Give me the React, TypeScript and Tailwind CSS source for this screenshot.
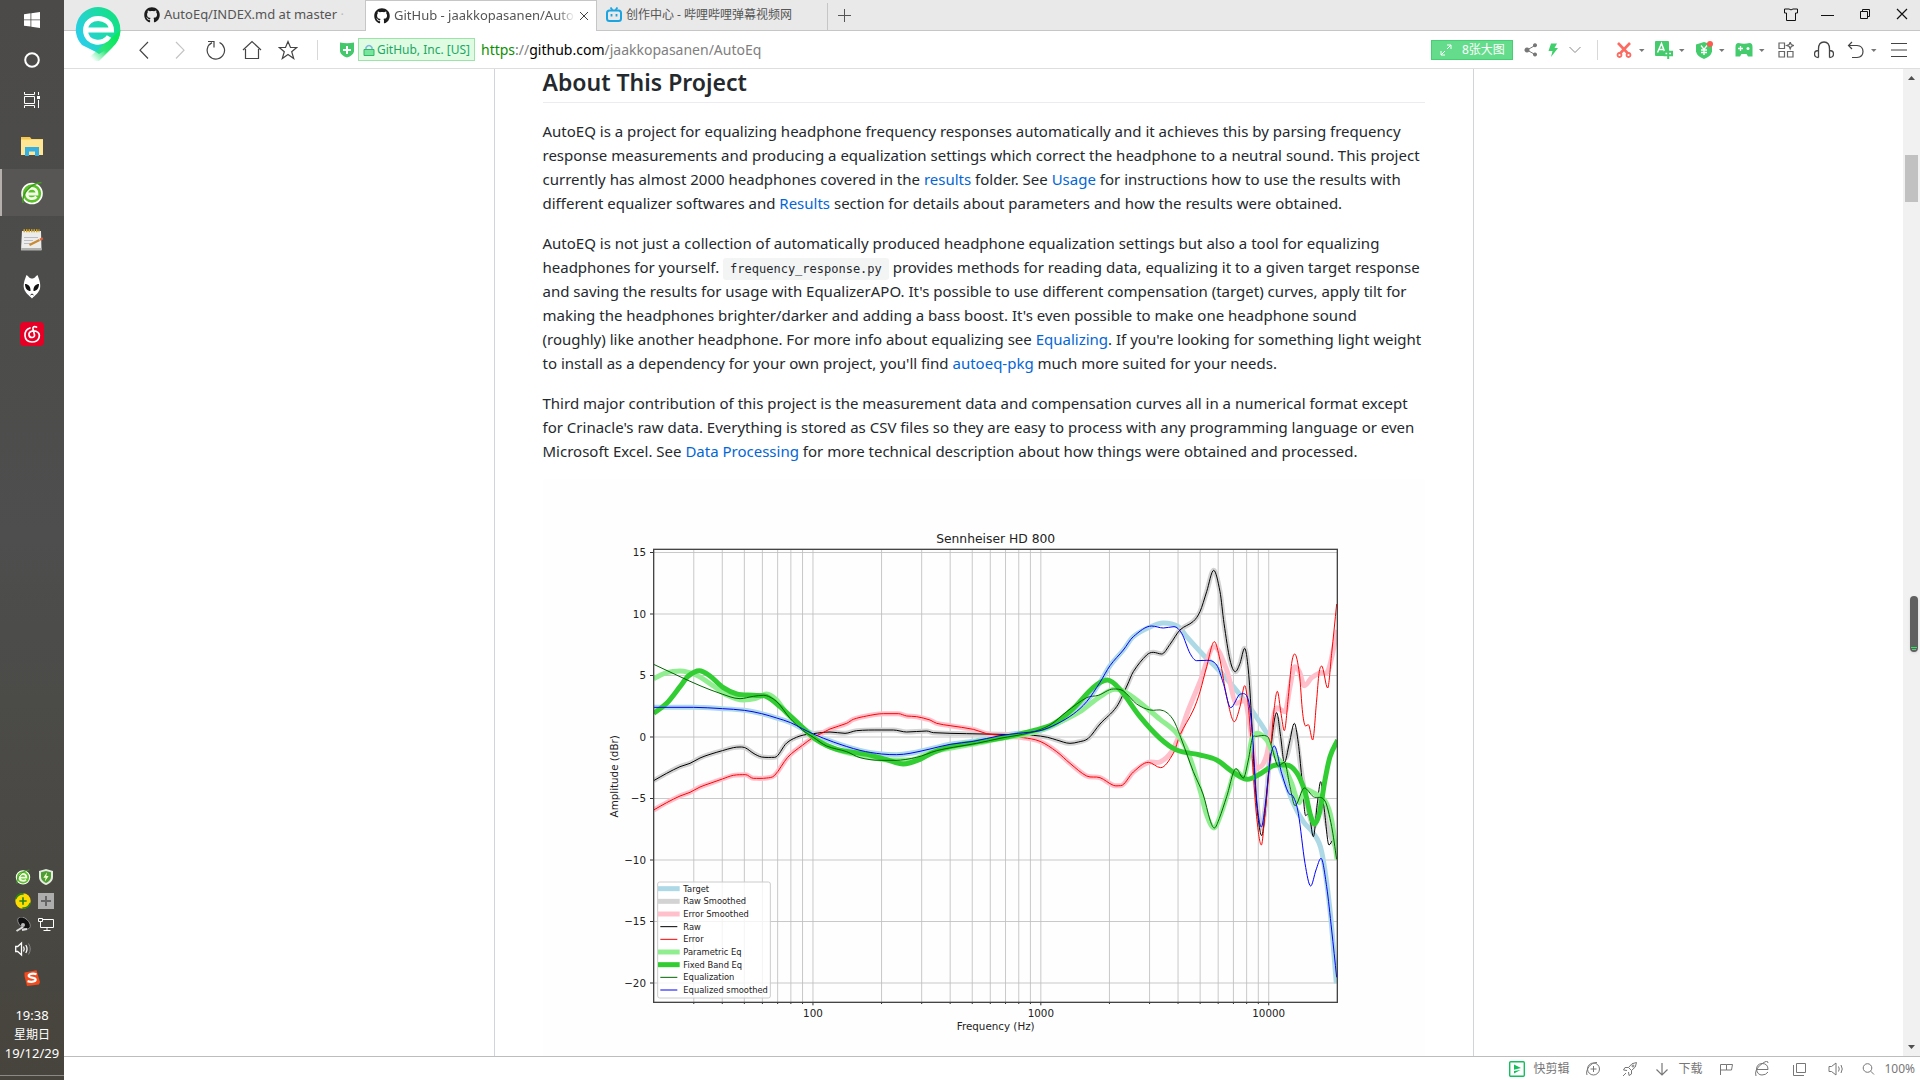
import type { ReactNode } from "react";
import { FaGithub } from "react-icons/fa";

type Point = [number, number];

/* Chart geometry: three drawing units per pixel, frequency on a log axis. */
const LEFT = 161;
const RIGHT = 2212;
const TOP = 88;
const BOTTOM = 1447;
const xOf = (hz: number) => LEFT + (Math.log10(hz / 20) * (RIGHT - LEFT)) / 3;
const yOf = (db: number) => 651 - 36.9 * db;

const shared = {
  raw: [
    [161, 782], [200, 760], [240, 740], [270, 730], [300, 714], [330, 703], [367, 692], [400, 683], [420, 681], [437, 684],
    [462, 701], [485, 711], [524, 712], [560, 669], [600, 648], [640, 641], [690, 636], [735, 640], [770, 632], [840, 630],
    [880, 630], [920, 636], [980, 633], [1000, 638], [1100, 641], [1200, 643], [1300, 646], [1343, 652], [1370, 660],
    [1410, 670], [1435, 666], [1465, 655], [1500, 612], [1550, 560], [1582, 495], [1600, 455], [1640, 405], [1660, 397],
    [1685, 402], [1710, 373], [1740, 330], [1780, 304], [1800, 275], [1820, 215], [1841, 151], [1860, 215], [1872, 310],
    [1890, 420], [1906, 455], [1920, 430], [1934, 385], [1945, 450],
  ] as Point[],
  error: [
    [161, 870], [200, 848], [240, 828], [270, 817], [300, 801], [330, 790], [367, 777], [400, 766], [437, 764], [460, 775],
    [500, 774], [524, 766], [563, 712], [607, 676], [640, 652], [665, 640], [690, 627], [740, 610], [760, 598], [800, 588],
    [850, 581], [895, 581], [920, 588], [950, 590], [990, 600], [1010, 610], [1050, 617], [1120, 628], [1160, 641],
    [1200, 646], [1270, 653], [1320, 664], [1370, 695], [1410, 730], [1460, 768], [1500, 773], [1540, 796], [1562, 797],
    [1600, 756], [1645, 727],
  ] as Point[],
  target: [
    [161, 562], [280, 562], [367, 566], [433, 571], [485, 581], [530, 594], [572, 608], [607, 626], [640, 642], [700, 666],
    [780, 691], [845, 702], [890, 704], [930, 700], [990, 687], [1050, 673], [1120, 664], [1200, 647], [1255, 640],
    [1320, 632], [1370, 612], [1420, 582], [1460, 545], [1500, 487], [1530, 437], [1570, 390], [1600, 350],
  ] as Point[],
};

const series: { name: string; color: string; thick: boolean; points: Point[] }[] = [
  {
    name: "Target", color: "#add8e6", thick: true,
    points: [...shared.target, [1650, 321], [1690, 309], [1735, 320], [1760, 350], [1810, 405], [1853, 447], [1900, 500],
      [1940, 550], [1975, 600], [2005, 650], [2050, 770], [2080, 850], [2110, 905], [2140, 940], [2165, 995], [2190, 1170], [2209, 1390]],
  },
  {
    name: "Raw Smoothed", color: "#d3d3d3", thick: true,
    points: [...shared.raw, [1955, 600], [1967, 800], [1983, 925], [1997, 850], [2012, 680], [2030, 595], [2056, 715], [2083, 630],
      [2105, 760], [2120, 850], [2142, 920], [2162, 840], [2185, 930], [2210, 990]],
  },
  {
    name: "Error Smoothed", color: "#ffc0cb", thick: true,
    points: [...shared.error, [1680, 726], [1715, 695], [1740, 640], [1765, 570], [1800, 485], [1843, 380], [1880, 450], [1910, 550],
      [1934, 540], [1950, 620], [1965, 735], [1980, 740], [2000, 705], [2015, 620], [2030, 563], [2055, 575], [2070, 500],
      [2084, 440], [2098, 455], [2113, 497], [2135, 473], [2160, 458], [2185, 450], [2212, 330]],
  },
  {
    name: "Raw", color: "#000000", thick: false,
    points: [...shared.raw, [1955, 600], [1963, 760], [1974, 890], [1985, 947], [1995, 880], [2012, 690], [2030, 578], [2042, 650],
      [2053, 728], [2068, 670], [2083, 610], [2095, 670], [2105, 770], [2117, 887], [2126, 880], [2140, 950], [2152, 850],
      [2162, 785], [2173, 870], [2187, 975], [2200, 960], [2210, 985]],
  },
  {
    name: "Error", color: "#ff0000", thick: false,
    points: [...shared.error, [1682, 743], [1720, 700], [1740, 645], [1780, 570], [1800, 515], [1820, 440], [1843, 365], [1860, 420],
      [1880, 530], [1903, 605], [1920, 560], [1934, 497], [1945, 560], [1955, 690], [1970, 890], [1984, 975], [1995, 880],
      [2010, 720], [2020, 590], [2032, 514], [2043, 580], [2053, 632], [2065, 530], [2075, 430], [2084, 402], [2098, 460],
      [2108, 580], [2117, 618], [2125, 614], [2138, 660], [2150, 540], [2157, 460], [2165, 438], [2183, 504], [2195, 400], [2210, 252]],
  },
  {
    name: "Parametric Eq", color: "#90ee90", thick: true,
    points: [[161, 476], [200, 458], [240, 453], [290, 466], [340, 498], [380, 525], [430, 540], [465, 536], [500, 522], [530, 540],
      [560, 580], [607, 622], [660, 665], [720, 692], [800, 710], [870, 720], [930, 720], [1000, 695], [1120, 672], [1200, 656],
      [1290, 640], [1360, 615], [1440, 575], [1500, 530], [1545, 508], [1590, 525], [1680, 598], [1730, 640], [1765, 700],
      [1800, 810], [1820, 885], [1842, 924], [1860, 890], [1885, 815], [1908, 752], [1930, 772], [1945, 715], [1955, 660],
      [1972, 640], [2000, 660], [2020, 700], [2050, 735], [2075, 790], [2097, 848], [2115, 808], [2140, 818], [2175, 843],
      [2195, 900], [2211, 1018]],
  },
  {
    name: "Fixed Band Eq", color: "#32cd32", thick: true,
    points: [[161, 580], [200, 550], [240, 500], [265, 468], [298, 452], [330, 468], [370, 503], [410, 522], [460, 526], [500, 530],
      [540, 560], [600, 615], [650, 660], [710, 688], [800, 703], [860, 719], [910, 732], [960, 718], [1000, 697], [1050, 680],
      [1120, 668], [1200, 655], [1300, 632], [1360, 612], [1420, 565], [1480, 502], [1522, 480], [1560, 508], [1620, 590],
      [1680, 655], [1730, 690], [1800, 705], [1850, 720], [1900, 757], [1942, 778], [1980, 762], [2020, 737], [2060, 735],
      [2090, 758], [2115, 815], [2130, 880], [2143, 912], [2158, 880], [2175, 780], [2190, 710], [2213, 660]],
  },
  {
    name: "Equalization", color: "#006400", thick: false,
    points: [[161, 433], [240, 470], [300, 497], [360, 520], [420, 536], [460, 529], [490, 526], [530, 545], [570, 595], [607, 630],
      [640, 652], [680, 678], [740, 695], [780, 713], [840, 721], [885, 721], [950, 712], [1010, 692], [1060, 682], [1130, 670],
      [1200, 655], [1290, 638], [1350, 615], [1400, 575], [1460, 533], [1495, 526], [1540, 507], [1570, 513], [1610, 552],
      [1650, 570], [1690, 572], [1720, 600], [1745, 660], [1780, 755], [1810, 825], [1830, 900], [1843, 924], [1858, 895],
      [1880, 830], [1908, 746], [1930, 774], [1945, 720], [1957, 655], [1967, 649], [2003, 650], [2015, 680], [2035, 738],
      [2053, 727], [2070, 800], [2085, 857], [2113, 804], [2140, 830], [2175, 843], [2195, 920], [2210, 1018]],
  },
  {
    name: "Equalized smoothed", color: "#0000ff", thick: false,
    points: [...shared.target, [1655, 318], [1690, 324], [1722, 320], [1745, 340], [1770, 400], [1790, 422], [1820, 421], [1850, 435],
      [1870, 490], [1892, 563], [1922, 522], [1945, 540], [1957, 640], [1970, 840], [1984, 921], [1995, 860], [2012, 710],
      [2023, 678], [2045, 760], [2065, 818], [2080, 830], [2095, 880], [2115, 1030], [2132, 1098], [2148, 1050], [2163, 1015],
      [2180, 1100], [2195, 1230], [2210, 1372]],
  },
];

/* Cubic through every point, flat at local peaks and dips. */
function smoothPath(points: Point[]) {
  let d = `M${points[0][0]} ${points[0][1]}`;
  for (let i = 0; i < points.length - 1; i++) {
    const a = points[Math.max(0, i - 1)];
    const b = points[i];
    const c = points[i + 1];
    const e = points[Math.min(points.length - 1, i + 2)];
    const w = (c[0] - b[0]) / 3;
    const slope = (p: Point, m: Point, n: Point) =>
      p === m || m === n ? 0 : (m[1] - p[1]) * (n[1] - m[1]) <= 0 ? 0 : (n[1] - p[1]) / (n[0] - p[0]);
    const first = i === 0 ? (c[1] - b[1]) / (c[0] - b[0]) : slope(a, b, c);
    const last = c === e ? (c[1] - b[1]) / (c[0] - b[0]) : slope(b, c, e);
    d += `C${b[0] + w} ${b[1] + w * first} ${c[0] - w} ${c[1] - w * last} ${c[0]} ${c[1]}`;
  }
  return d;
}

const frequencies = [30, 40, 50, 60, 70, 80, 90].flatMap((f) => [f, f * 10, f * 100]).concat([100, 200, 1000, 2000, 10000]);
const levels = [15, 10, 5, 0, -5, -10, -15, -20];

function Chart() {
  return (
    <svg viewBox="-171 -123 2646 1764" className="block w-full" role="img" aria-label="Sennheiser HD 800 frequency response" fontFamily='"DejaVu Sans", sans-serif' fill="#222">
      <rect x="-171" y="-123" width="2646" height="1764" fill="#fefefe" />
      <defs>
        <clipPath id="plot"><rect x={LEFT} y={TOP} width={RIGHT - LEFT} height={BOTTOM - TOP} /></clipPath>
      </defs>
      <g stroke="#b0b0b0" strokeWidth="2.6" opacity="0.8">
        {frequencies.map((f) => <path key={f} d={`M${xOf(f)} ${TOP}V${BOTTOM}`} />)}
        {levels.map((v) => <path key={v} d={`M${LEFT} ${yOf(v)}H${RIGHT}`} />)}
      </g>
      <g stroke="#333" strokeWidth="3">
        {frequencies.map((f) => <path key={f} d={`M${xOf(f)} ${BOTTOM}v${[100, 1000, 10000].includes(f) ? 9 : 5}`} />)}
        {levels.map((v) => <path key={v} d={`M${LEFT} ${yOf(v)}h-11`} />)}
      </g>
      <g clipPath="url(#plot)" fill="none">
        {series.map((s) => <path key={s.name} d={smoothPath(s.points)} stroke={s.color} strokeWidth={s.thick ? 15 : 3} strokeLinejoin="round" />)}
      </g>
      <rect x={LEFT} y={TOP} width={RIGHT - LEFT} height={BOTTOM - TOP} fill="none" stroke="#444" strokeWidth="4" />
      <rect x="173" y="1086" width="338" height="348" rx="6" fill="#fff" fillOpacity="0.8" stroke="#ccc" strokeWidth="3" />
      {series.map((s, i) => (
        <g key={s.name}>
          <path d={`M${s.thick ? 174 : 181} ${1106 + i * 38}H${s.thick ? 239 : 232}`} stroke={s.color} strokeWidth={s.thick ? 15 : 3} />
          <text x="250" y={1115 + i * 38} fontSize="25">{s.name}</text>
        </g>
      ))}
      <g fontSize="31">
        <g textAnchor="end">
          {levels.map((v) => <text key={v} x="138" y={yOf(v) + 11}>{String(v).replace("-", "−")}</text>)}
        </g>
        <g textAnchor="middle">
          {[100, 1000, 10000].map((f) => <text key={f} x={xOf(f)} y="1490">{f}</text>)}
          <text x="1187" y="1530">Frequency (Hz)</text>
          <text transform="translate(53 769) rotate(-90)">Amplitude (dBr)</text>
          <text x="1187" y="69" fontSize="37">Sennheiser HD 800</text>
        </g>
      </g>
    </svg>
  );
}

function Icon({ size = 24, children, className = "", vb = 24 }: { size?: number; vb?: number; children: ReactNode; className?: string }) {
  return (
    <svg width={size} height={size} viewBox={`0 0 ${vb} ${vb}`} fill="none" stroke="currentColor" className={`shrink-0 ${className}`} aria-hidden="true">
      {children}
    </svg>
  );
}

function GreenE({ size }: { size: number }) {
  return (
    <Icon size={size}>
      <circle cx="12" cy="12.5" r="10" fill="#5cc02a" stroke="#fff" strokeWidth="1.6" />
      <path d="M6.500 13H17C17.400 5.600 7 5.600 6.700 13C7 18.700 14 18.500 16.500 15.800" stroke="#f4ffe8" strokeWidth="2.800" />
      <path d="M3 22C1.500 13 10 2.500 21.500 1.500" stroke="#3f9b1e" strokeWidth="1.500" />
    </Icon>
  );
}

function TaskButton({ label, active, children }: { label: string; active?: boolean; children: ReactNode }) {
  return (
    <button aria-label={label} className={`flex h-[47px] w-full items-center justify-center ${active ? "border-l-2 border-[#b5b0ab] bg-[#575654] pr-0.5" : ""}`}>
      {children}
    </button>
  );
}

function Taskbar() {
  return (
    <aside className="flex w-16 shrink-0 flex-col bg-linear-to-b from-[#4b4a48] via-[#4d4e4d] to-[#47443d] text-white">
      <button aria-label="Start" className="flex h-10 items-center justify-center">
        <Icon size={16} vb={16}><path fill="#fff" stroke="none" d="M0 2.200 6.500 1.300V7.500H0zM7.300 1.200 16 0V7.500H7.300zM0 8.300H6.500V14.600L0 13.700zM7.300 8.300H16V16L7.300 14.800z" /></Icon>
      </button>
      <button aria-label="Cortana" className="flex h-10 items-center justify-center">
        <Icon size={16} vb={16}><circle cx="8" cy="8" r="6.800" strokeWidth="2" /></Icon>
      </button>
      <button aria-label="Task view" className="flex h-10 items-center justify-center">
        <Icon size={16} vb={16}><path d="M.5 4.500h10v7H.5zM.5 0v2.500h10V0M.5 16v-2.500h10V16M14.500 0v3M14.500 8v8" /><path fill="#fff" stroke="none" d="M13 4h3v3h-3z" /></Icon>
      </button>
      <div className="flex flex-col pt-0.5">
        <TaskButton label="File Explorer">
          <Icon><path fill="#f8c84a" stroke="none" d="M1 3h9l1.500 2H23v5H1z" /><path fill="#ffe694" stroke="none" d="M1 5.500h22V21H1z" /><path fill="#35aee2" stroke="none" d="M5 13h14v9h-4v-4.500H9V22H5z" /></Icon>
        </TaskButton>
        <TaskButton label="360 browser" active><GreenE size={24} /></TaskButton>
        <TaskButton label="Notepad">
          <Icon><path fill="#ececea" stroke="none" d="M2 3h19l.5 19H1z" /><path fill="#b0b0ae" stroke="none" d="M1.200 20h20.200l.1 2.500H1z" /><path stroke="#d8a520" strokeWidth="3" strokeDasharray="1.500 1" d="M3.500 2.800h16" /><path stroke="#b9bcc2" d="M4 9.500h14M4 12.500h9M4 15.500h7" /><path stroke="#c98a32" strokeWidth="2.200" d="m9.500 17 10-5" /><path stroke="#e0603a" strokeWidth="2.400" d="m20 11.700 2.800-1.400" /></Icon>
        </TaskButton>
        <TaskButton label="foobar2000">
          <Icon><path fill="#fff" stroke="none" d="M6.500 0C8.500 1 9 3.500 12 3.500S15.500 1 17.500 0c1.500 4 3.500 9 2.500 13.500C19 17.500 15 20.500 12 23.500 9 20.500 5 17.500 4 13.500 3 9 5 4 6.500 0z" /><path fill="#111" stroke="none" d="M5 9c3 0 6 2.500 5.500 7C7.500 16 5 13.500 5 9zM19 9c-3 0-6 2.500-5.500 7 3 0 5.500-2.500 5.500-7z" /><path stroke="#222" d="m10.500 20 1.500-1 1.500 1" /></Icon>
        </TaskButton>
        <TaskButton label="NetEase Music">
          <Icon><rect width="24" height="24" rx="4" fill="#e60026" stroke="none" /><path stroke="#fff" strokeWidth="1.700" strokeLinecap="round" d="M10 6C3 8.500 3 19.500 12 20 20 20 21.500 11.500 16 9.300 12.500 8 8.500 9.800 9 13c.6 3.500 6 3.200 5.500-.2L13 7c-.5-2.300 1.500-3 3.500-2" /></Icon>
        </TaskButton>
      </div>
      <div className="mt-auto grid grid-cols-2 justify-items-center gap-y-2 pr-[6px] pl-[11px]">
        <GreenE size={16} />
        <Icon size={16}><path fill="#e4ebdf" stroke="none" d="M12 0l10.500 3v9c0 6-5 10-10.500 12C6.500 22 1.500 18 1.500 12V3z" /><path fill="#4f9d35" stroke="none" d="M12 3l7.500 2v7c0 4.500-3.500 7-7.500 9-4-2-7.500-4.500-7.500-9V5z" /><path fill="#f4ffd0" stroke="none" d="M13.500 5 8 13h3.500L10 19l6-8.500h-3.500z" /></Icon>
        <Icon size={16}><circle cx="12" cy="12" r="11.500" fill="#ffdc00" stroke="none" /><path stroke="#27861b" strokeWidth="2.500" d="M1 9C3 4 8 1 13 1.500M23 15c-2 5-7 8-12 7.500M12 6.500v11M6.500 12h11" /></Icon>
        <Icon size={16} vb={16}><path fill="#adadad" stroke="none" d="M0 0h16v16H0z" /><path stroke="#666" strokeWidth="2" d="M8 3v10M3 8h10" /></Icon>
        <Icon size={16} vb={16}><ellipse cx="9" cy="6" rx="7.500" ry="4.500" transform="rotate(42 9 6)" fill="#111" stroke="#999" strokeWidth=".8" /><path stroke="#ddd" strokeWidth="2" d="M1.500 14 8 10M7 13l5-1" /><circle cx="8" cy="8" r="2" fill="#bbb" stroke="none" /></Icon>
        <Icon size={16} vb={16}><path d="M5 2.500h10.500v8H2.500V6M9 10.500V13.500M5.500 13.500h7M.5 1.500h4v3h-4zM2.500 4.500V7" /></Icon>
        <Icon size={16} vb={16}><path strokeWidth="1.300" d="M.7 5.500h2L6.500 2v12L2.700 10.500h-2zM8.500 5.500q1.500 2.500 0 5M10.800 4q2.500 4 0 8" /><path stroke="#888" d="M13.500 2.500q3.500 5.500 0 11" /></Icon>
      </div>
      <div className="mt-[13px] flex justify-center">
        <Icon size={16} vb={16}><path fill="#f24a1c" stroke="none" d="m.5 2.500 12-2.300L16 12l-1 2.500L3 16 .5 6z" /><path stroke="#fff" strokeWidth="2.200" d="M12.500 4.200C9 3.200 4.500 3.800 4.700 6s6.800 1 7 3.500c0 2.500-5 2.800-8.200 1.600" /></Icon>
      </div>
      <div className="mt-5 flex flex-col items-center border-b border-[#8b8985] pb-3 text-[13px] leading-[19px]">
        <span>19:38</span>
        <span className="text-xs leading-[19px]">星期日</span>
        <span>19/12/29</span>
      </div>
      <div className="h-1" />
    </aside>
  );
}

function BrowserLogo() {
  return (
    <svg width="46" height="56" viewBox="0 0 46 56" fill="none" className="absolute top-1.5 left-[11px]" aria-hidden="true">
      <defs>
        <linearGradient id="disc" x1="0" y1="34" x2="46" y2="10" gradientUnits="userSpaceOnUse"><stop stopColor="#2bcdf2" /><stop offset=".55" stopColor="#1ed9ae" /><stop offset="1" stopColor="#0fe37a" /></linearGradient>
        <linearGradient id="tail" x1="40" y1="32" x2="18" y2="54" gradientUnits="userSpaceOnUse"><stop stopColor="#0ae85f" /><stop offset=".5" stopColor="#2de678" /><stop offset="1" stopColor="#2de678" stopOpacity="0" /></linearGradient>
      </defs>
      <path fill="url(#disc)" d="M23 1a22.500 22.500 0 0 1 17 37L24 48l-3-2L7 39A22.500 22.500 0 0 1 23 1z" />
      <path fill="url(#tail)" d="M45.500 24C45 32 42 37 37 42L24 55H10L34 34z" />
      <path d="M10 24H36.500C36 9 10.500 8 10.500 24.500 11 38 29 39.500 34 30.500" stroke="#fff" strokeWidth="5" />
    </svg>
  );
}

function BilibiliIcon() {
  return (
    <Icon size={16} vb={16} className="text-[#1ba4e0]">
      <rect x="1" y="3.500" width="14" height="10.500" rx="2.500" strokeWidth="2" />
      <path strokeWidth="1.800" d="m4.500.5 2 2.500M11.500.5l-2 2.500M5.500 7v2.500M10.500 7v2.500" />
    </Icon>
  );
}

function TitleBar() {
  return (
    <header className="flex h-[31px] bg-[#e9e9e9] text-[13px] text-[#555]">
      <div role="tablist" className="flex min-w-0">
        <button role="tab" className="flex w-[301px] items-center gap-1 border-b border-[#c6c6c6] pl-20 whitespace-nowrap">
          <FaGithub size={16} color="#1b1b1b" /><span>AutoEq/INDEX.md at master <span className="text-[#bbb]">·</span></span>
        </button>
        <button role="tab" aria-selected="true" className="flex w-[232px] items-center gap-1 border-x border-t border-[#c6c6c6] bg-white pl-2 whitespace-nowrap">
          <FaGithub size={16} color="#1b1b1b" className="shrink-0" />
          <span className="w-[181px] shrink-0 mask-r-from-90% text-left">GitHub - jaakkopasanen/Auto</span>
          <Icon size={10} vb={10} className="text-[#444]"><path d="m1 1 8 8M9 1 1 9" /></Icon>
        </button>
        <button role="tab" className="flex w-[231px] items-center gap-1 border-b border-[#c6c6c6] pl-[9px] text-xs">
          <BilibiliIcon /><span>创作中心 - 哔哩哔哩弹幕视频网</span>
          <span className="ml-auto h-[27px] w-px self-end bg-[#c6c6c6]" />
        </button>
      </div>
      <div className="flex flex-1 items-center justify-between border-b border-[#c6c6c6]">
        <button aria-label="New tab" className="flex w-8 justify-center text-[#555]"><Icon size={13} vb={13}><path d="M6.500 0v13M0 6.500h13" /></Icon></button>
        <div className="flex text-[#111]">
          <button aria-label="Skins" className="flex w-[37px] justify-center"><Icon size={14} vb={14}><path d="M4 1h1q2 1.800 4 0h1l3.500 0V5h-2v7.500h-9V5h-2V1z" /></Icon></button>
          <button aria-label="Minimize" className="flex w-[37px] justify-center"><Icon size={13} vb={13}><path d="M0 7.500h13" /></Icon></button>
          <button aria-label="Restore" className="flex w-[37px] justify-center"><Icon size={12} vb={12}><path d="M1.500 3.500h7v7h-7zM3.500 3.500v-2h7v7h-2" /></Icon></button>
          <button aria-label="Close" className="flex w-[37px] justify-center"><Icon size={12} vb={12}><path strokeWidth="1.200" d="m1 1 10 10M11 1 1 11" /></Icon></button>
        </div>
      </div>
    </header>
  );
}

function Tool({ label, children }: { label: string; children: ReactNode }) {
  return <button aria-label={label} className="flex w-6 shrink-0 justify-center">{children}</button>;
}

function Caret() {
  return <Icon size={11} vb={11} className="text-[#777]"><path fill="currentColor" stroke="none" d="M3 5h5.500L5.800 8z" /></Icon>;
}

function ToolWithMenu({ label, children }: { label: string; children: ReactNode }) {
  return <button aria-label={label} className="flex w-10 shrink-0 items-center"><span className="flex w-6 justify-center">{children}</span><Caret /></button>;
}

function Toolbar() {
  return (
    <div className="flex h-[38px] items-center justify-between border-b border-[#dedede] bg-white pl-[68px] text-[#444]">
      <div className="flex items-center">
        <div className="flex items-center gap-3">
          <Tool label="Back"><Icon size={20} vb={20}><path strokeWidth="1.200" d="M14 2 6 10.200 14 18.500" /></Icon></Tool>
          <Tool label="Forward"><Icon size={20} vb={20} className="text-[#c4c4c4]"><path strokeWidth="1.200" d="m6 2 8 8.200L6 18.500" /></Icon></Tool>
          <Tool label="Reload"><Icon size={20} vb={20}><path strokeWidth="1.200" d="M13.500 2.500A8.700 8.700 0 1 1 6 2.600M2 1.500h6v6" /></Icon></Tool>
          <Tool label="Home"><Icon size={20} vb={20}><path strokeWidth="1.200" d="M1 10 10 1.500 19 10M3.500 9v9.500h13V9" /></Icon></Tool>
          <Tool label="Favourite"><Icon size={20} vb={20}><path strokeWidth="1.200" d="m10 1.500 2.500 6h6.200l-5 4.200 2 6.800-5.700-4-5.700 4 2-6.800-5-4.200h6.200z" /></Icon></Tool>
        </div>
        <div className="ml-[17px] h-5 w-px bg-[#d8d8d8]" />
        <Icon size={16} vb={16} className="ml-[21px]"><path fill="#43c96b" stroke="none" d="M1 .5q7 1.500 14 0v9q-1 4-7 6-6-2-7-6z" /><path stroke="#fff" strokeWidth="2" d="M8 4v8M4 8h8" /></Icon>
        <div className="ml-[3px] flex h-[23px] w-[117px] items-center border border-[#9be3a8] bg-[#dffbe2] pl-1 text-xs whitespace-nowrap text-[#20a765]">
          <Icon size={12} vb={12}><path stroke="#7fb8dc" strokeWidth="1.500" d="M3 6V3.500q3-4 6 0V6" /><path fill="#79e49b" stroke="#2fb865" d="M1 5.500h10v6H1z" /></Icon>
          <span className="pl-0.5">GitHub, Inc. [US]</span>
        </div>
        <a href="https://github.com/jaakkopasanen/AutoEq" className="ml-1.5 text-sm text-[#808080]"><span className="text-[#0b8f00]">https</span>://<span className="text-black">github.com</span>/jaakkopasanen/AutoEq</a>
      </div>
      <div className="flex items-center pr-[9px]">
        <button className="flex h-5 w-[82px] items-center gap-2.5 border border-[#45cf73] bg-[#64dc8c] pl-2 text-xs text-white">
          <Icon size={12} vb={12}><path d="M7 1h4v4M11 1 7 5M5 11H1V7M1 11l4-4" /></Icon>8张大图
        </button>
        <div className="ml-1.5 flex items-center">
          <Tool label="Share"><Icon size={14} vb={14} className="text-[#777]"><path d="M11 2.500 3 7l8 4.500" /><path fill="currentColor" stroke="none" d="M3 4.500a2.500 2.500 0 1 0 .01 0zM11 .3a2 2 0 1 0 .01 0zM11 9.500a2 2 0 1 0 .01 0z" /></Icon></Tool>
          <button aria-label="Turbo" className="flex w-5 justify-center"><Icon size={14} vb={14}><path fill="#3fcf6b" stroke="none" d="M5 .5h6L8.500 5h3.500L5 14l1.500-6H2.500z" /></Icon></button>
          <Tool label="More"><Icon size={12} vb={12} className="text-[#888]"><path d="m.5 3 5.500 5.500L11.500 3" /></Icon></Tool>
        </div>
        <div className="mr-3.5 ml-2.5 h-5 w-px bg-[#d8d8d8]" />
        <ToolWithMenu label="Screenshot"><Icon size={16} vb={16}><path stroke="#fb6b62" strokeWidth="2.600" d="M2 1 12 11.500M14 1 4 11.500" /><path stroke="#fb6b62" strokeWidth="1.800" d="M3.500 11a2 2 0 1 0 .01 0zM12.500 11a2 2 0 1 0 .01 0z" /></Icon></ToolWithMenu>
        <ToolWithMenu label="Translate"><Icon size={18} vb={18}><rect width="14" height="15" rx="1" fill="#43cb6c" stroke="none" /><path stroke="#fff" strokeWidth="1.500" d="m2.500 11.500 4-9 3 8M4 8.500h4.500" /><path stroke="#fff" strokeWidth="4" d="M9 12.500h8M13 10v8" /><path stroke="#43cb6c" strokeWidth="2" d="M9.500 10.800h7.500v3.400H9.500zM13.200 9v9" /></Icon></ToolWithMenu>
        <ToolWithMenu label="Shopping"><Icon size={18} vb={18}><path fill="#43cb6c" stroke="none" d="M1 3.500 9 1l8 2.500v7q-1 5-8 7.500-7-2.500-8-7.500z" /><path stroke="#fff" strokeWidth="1.300" d="m6 4.500 3 4 3-4M9 8.500V14M6 9h6M6 11.500h6" /><circle cx="15" cy="3" r="3" fill="#ff5a52" stroke="none" /></Icon></ToolWithMenu>
        <ToolWithMenu label="Games"><Icon size={18} vb={18}><path fill="#43cb6c" stroke="none" d="M3.500 2q5.500 1.500 11 0Q17.500 2 17.500 6v9.500H13L11.500 13h-5L5 15.500H.5V6q0-4 3-4z" /><path stroke="#fff" strokeWidth="1.300" d="M5.500 5v5M3 7.500h5" /><circle cx="13" cy="7.500" r="1.500" fill="#fff" stroke="none" /></Icon></ToolWithMenu>
        <button aria-label="Extensions" className="flex w-7 justify-center"><Icon size={16} vb={16} className="text-[#666]"><path strokeWidth="1.200" d="M1 1h5.500v5.500H1zM1 9.500h5.500V15H1zM9.500 9.500H15V15H9.500zM12.200 0l1 2.500 2.500 1-2.500 1-1 2.500-1-2.500-2.500-1 2.500-1z" /></Icon></button>
        <div className="ml-3 flex items-center">
          <Tool label="Music"><Icon size={20} vb={20}><path strokeWidth="1.300" d="M4.500 17.500V9q0-7 5.500-7t5.500 7v8.500M4.500 17.500Q.5 17.500.5 14t4-3.500M15.500 17.500q4 0 4-3.500t-4-3.500" /></Icon></Tool>
        </div>
        <div className="ml-2 flex items-center">
          <Tool label="Undo"><Icon size={18} vb={18}><path strokeWidth="1.200" d="M5 1 1.500 4.500 5 8M1.500 4.500H10Q16 5 16 10.500T10 16.500H5" /></Icon></Tool>
          <Caret />
        </div>
        <div className="ml-2 flex"><Tool label="Menu"><Icon size={16} vb={16}><path d="M0 1.500h16M0 8h16M0 14.500h16" /></Icon></Tool></div>
      </div>
    </div>
  );
}

function Link({ children }: { children: ReactNode }) {
  return <a href="#" className="text-[#0366d6]">{children}</a>;
}

function Article() {
  return (
    <article className="mx-auto w-[980px] border-x border-[#d1d5da] px-12 text-[15px] leading-6 whitespace-nowrap text-[#24292e]">
      <h2 className="border-b border-[#eaecef] pb-[7px] text-[23px] leading-[26px] font-semibold">About This Project</h2>
      <p className="mt-4">
        AutoEQ is a project for equalizing headphone frequency responses automatically and it achieves this by parsing frequency<br />
        response measurements and producing a equalization settings which correct the headphone to a neutral sound. This project<br />
        currently has almost 2000 headphones covered in the <Link>results</Link> folder. See <Link>Usage</Link> for instructions how to use the results with<br />
        different equalizer softwares and <Link>Results</Link> section for details about parameters and how the results were obtained.
      </p>
      <p className="mt-4">
        AutoEQ is not just a collection of automatically produced headphone equalization settings but also a tool for equalizing<br />
        headphones for yourself. <code className="rounded-[3px] bg-[#f3f4f4] px-[7px] py-1 font-['DejaVu_Sans_Mono',monospace] text-xs">frequency_response.py</code> provides methods for reading data, equalizing it to a given target response<br />
        and saving the results for usage with EqualizerAPO. It's possible to use different compensation (target) curves, apply tilt for<br />
        making the headphones brighter/darker and adding a bass boost. It's even possible to make one headphone sound<br />
        (roughly) like another headphone. For more info about equalizing see <Link>Equalizing</Link>. If you're looking for something light weight<br />
        to install as a dependency for your own project, you'll find <Link>autoeq-pkg</Link> much more suited for your needs.
      </p>
      <p className="mt-4">
        Third major contribution of this project is the measurement data and compensation curves all in a numerical format except<br />
        for Crinacle's raw data. Everything is stored as CSV files so they are easy to process with any programming language or even<br />
        Microsoft Excel. See <Link>Data Processing</Link> for more technical description about how things were obtained and processed.
      </p>
      <div className="mt-4"><Chart /></div>
    </article>
  );
}

function StatusBar() {
  return (
    <footer className="flex h-6 items-center justify-end border-t border-[#bdbdbd] bg-white pr-[5px] text-xs text-[#777]">
      <button className="flex items-center gap-2"><Icon size={16} vb={16} className="text-[#12bf5c]"><rect x=".7" y=".7" width="14.600" height="14.600" rx="1" strokeWidth="1.400" /><path fill="currentColor" stroke="none" d="m5 3.500 7 3.500-7 1.800zM5 10l6.500-1L5 12.500z" /></Icon>快剪辑</button>
      <button aria-label="Speed up" className="ml-4"><Icon size={16} vb={16}><circle cx="8.500" cy="8" r="6" /><path d="M2 14C0 9 6 1 12 1.500M8.500 5v6M5.500 8h6" /></Icon></button>
      <button aria-label="Boost" className="ml-[21px]"><Icon size={16} vb={16}><path d="M14.500 1.500q-5 0-8 5L9.500 9.500q5-3 5-8zM6.500 6.500H3L1.500 9 5 9.500M9.500 9.500V13L7 14.500 6.500 11M4 12l-3 3" /><circle cx="11" cy="5" r="1" /></Icon></button>
      <button className="ml-4 flex items-center gap-2"><Icon size={16} vb={16}><path strokeWidth="1.200" d="M8 2v12M2.500 8.500 8 14l5.500-5.500" /></Icon>下载</button>
      <button aria-label="Flag" className="ml-4"><Icon size={16} vb={16}><path d="M2.500 14V3.500h6v5.500h-6M8.500 3.500h6l-1 5.500h-5" /></Icon></button>
      <button aria-label="Engine" className="ml-5"><Icon size={16} vb={16}><path d="M2.500 8.500h11.500q0-6-6-6-5.500.5-5.500 6 1 5.500 5.500 5.500 4 0 6-3M2 15Q0 9 7 3.500T14 2" /></Icon></button>
      <button aria-label="Windows" className="ml-[21px]"><Icon size={16} vb={16}><path d="M5.500 2.500h9v9h-9zM2.500 4v10.500H13" /></Icon></button>
      <button aria-label="Sound" className="ml-[21px]"><Icon size={16} vb={16}><path d="M1 5.500h2.500L8 2v12L3.500 10.500H1zM10.500 5.500q1.500 2.500 0 5M13 4q2.500 4 0 8" /></Icon></button>
      <button className="ml-4 flex items-center gap-2"><Icon size={16} vb={16}><circle cx="7.500" cy="7" r="4.300" /><path d="m10.700 10.200 3.300 3.300" /></Icon>100%</button>
    </footer>
  );
}

export default function App() {
  return (
    <div className="flex h-screen overflow-hidden bg-white font-['Noto_Sans','Noto_Sans_CJK_SC',sans-serif]">
      <Taskbar />
      <div className="relative flex min-w-0 flex-1 flex-col">
        <TitleBar />
        <Toolbar />
        <BrowserLogo />
        <div className="flex min-h-0 flex-1">
          <main className="min-w-0 flex-1 overflow-hidden"><Article /></main>
          <div className="flex w-[17px] flex-col items-center bg-[#f1f1f1] text-[#505050]">
            <Icon size={17} vb={17}><path fill="currentColor" stroke="none" d="M8.500 7 12 11H5z" /></Icon>
            <div className="mt-[69px] h-[47px] w-[13px] bg-[#c1c1c1]" />
            <Icon size={17} vb={17} className="mt-auto"><path fill="currentColor" stroke="none" d="M5 6h7l-3.500 4z" /></Icon>
          </div>
        </div>
        <div className="absolute top-[596px] right-0.5 flex h-14 w-2 flex-col items-center justify-end gap-px rounded-full bg-[#616161] pb-0.5 shadow-sm">
          <div className="h-px w-1.5 bg-[#3fdc6a]" />
          <div className="h-px w-1 bg-[#3fdc6a]" />
        </div>
        <StatusBar />
      </div>
    </div>
  );
}
